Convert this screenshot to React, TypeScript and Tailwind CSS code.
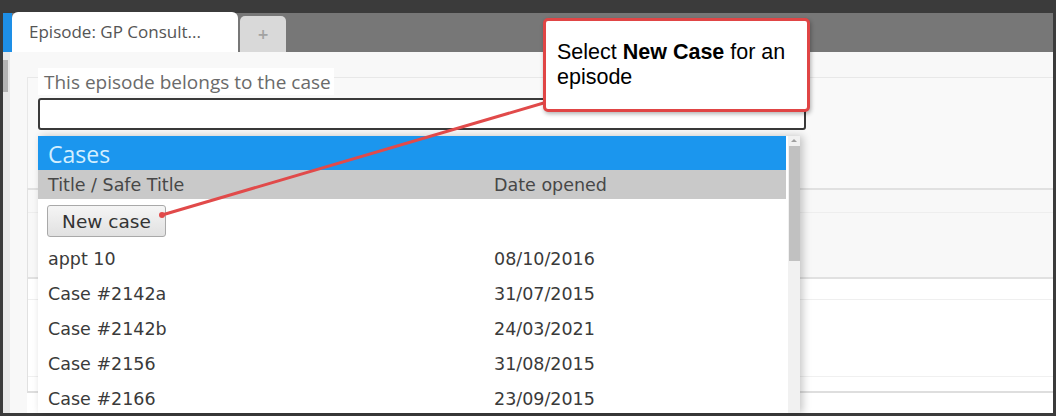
const cases = [
  { title: "appt 10", opened: "08/10/2016" },
  { title: "Case #2142a", opened: "31/07/2015" },
  { title: "Case #2142b", opened: "24/03/2021" },
  { title: "Case #2156", opened: "31/08/2015" },
  { title: "Case #2166", opened: "23/09/2015" },
];

const uiFont = "font-['Open_Sans',sans-serif]";
const listFont = "font-['DejaVu_Sans',Verdana,sans-serif]";

const CaseDropdown = () => (
  <div className="absolute left-[38px] top-[136px] bottom-[3px] w-[762px] flex shadow-[3px_0_8px_rgba(0,0,0,0.22)]">
    <div className={`flex-1 bg-white ${listFont}`}>
      <div className={`h-[34px] mr-[2px] bg-[#1b96ee] pl-[10px] text-[23px] leading-[36px] text-[#d3efff] ${uiFont}`}>
        Cases
      </div>
      <div className="h-[29px] mr-[2px] bg-[#c9c9c9] flex items-center pt-[2px] text-[17.5px] text-[#474747]">
        <span className="w-[456px] pl-[10px]">Title / Safe Title</span>
        <span>Date opened</span>
      </div>
      <button className="mt-[6px] ml-[9px] w-[119px] h-[32px] border border-[#a9a9a9] rounded-[3px] bg-gradient-to-b from-[#f5f5f5] to-[#e1e1e1] text-[18.5px] text-[#333] leading-none pt-[2px]">
        New case
      </button>
      <div className="mt-[4px]">
        {cases.map((c) => (
          <div key={c.title} className="h-[35px] flex items-center pt-[2px] text-[17.5px] text-[#3a3a3a]">
            <span className="w-[456px] pl-[10px]">{c.title}</span>
            <span>{c.opened}</span>
          </div>
        ))}
      </div>
    </div>
    <div className="w-[12px] bg-[#f1f1f1] flex flex-col items-center">
      <div className="mt-[3px] w-0 h-0 border-x-[3px] border-x-transparent border-b-[3px] border-b-[#a0a0a0]" />
      <div className="mt-[4px] w-[11px] h-[115px] bg-[#c1c1c1]" />
    </div>
  </div>
);

const Callout = () => (
  <>
    <svg className="absolute inset-0 pointer-events-none" width="1056" height="416">
      <line x1="547" y1="102" x2="162" y2="215" stroke="#e14a4a" strokeWidth="3" strokeLinecap="round" />
      <circle cx="162" cy="215" r="3" fill="#e14a4a" />
    </svg>
    <div className="absolute left-[543px] top-[18px] w-[267px] h-[94px] border-[3px] border-[#e04545] rounded-[5px] bg-white shadow-[1px_2px_4px_rgba(0,0,0,0.3)] pl-[11px] pt-[19px] font-['Liberation_Sans',Arial,sans-serif] text-[21.5px] leading-[25px] text-black">
      Select <b>New Case</b> for an episode
    </div>
  </>
);

export default function App() {
  return (
    <div className="relative w-[1056px] h-[416px] overflow-hidden bg-[#3b3b3b] pt-[13px] px-[3px] pb-[3px] flex flex-col">
      {/* tab strip */}
      <div className="h-[39px] shrink-0 bg-[#777777] flex items-end">
        <div className="w-[9px] h-full bg-[#1e8fe6]" />
        <div className={`w-[226px] h-[40px] bg-white rounded-t-[6px] flex items-center pl-[17px] text-[17px] text-[#555] ${uiFont}`}>
          Episode: GP Consult...
        </div>
        <div className="ml-[2px] w-[46px] h-[36px] bg-[#d9d9d9] rounded-t-[5px] flex items-center justify-center text-[14px] font-bold text-[#a2a2a2] font-['DejaVu_Sans',sans-serif]">
          +
        </div>
      </div>

      <div className="flex-1 flex min-h-0">
        <div className="w-[7px] bg-[#e8e8e8]">
          <div className="mt-[8px] w-[5px] h-[32px] bg-[#b3b3b3]" />
        </div>

        <div className="flex-1 bg-[#f8f8f8] pl-[17px] flex flex-col">
          <div className="mt-[25px] h-[111px] border-t border-l border-[#e8e8e8] bg-[#f9f9f9]">
            <div className={`-mt-[10px] ml-[10px] w-fit bg-white pl-[6px] pr-[3px] h-[27px] leading-[28px] text-[19px] text-[#6a6a6a] ${uiFont}`}>
              This episode belongs to the case
            </div>
            <div className="mt-[3px] ml-[10px] w-[768px] h-[32px] border-2 border-[#3a3a3a] rounded-[3px] bg-white" />
          </div>
          <div className="h-[89px] border-t-2 border-l border-[#e1e1e1] bg-[#f8f8f8]">
            <div className="h-[23px] border-b border-[#eeeeee]" />
          </div>
          <div className="h-[114px] border-t-2 border-l border-[#e1e1e1] bg-white">
            <div className="h-[21px] border-b border-[#efefef]" />
            <div className="h-[77px] border-b border-[#f0f0f0]" />
          </div>
          <div className="flex-1 border-t-2 border-[#dedede] bg-white" />
        </div>
      </div>

      <CaseDropdown />
      <Callout />
    </div>
  );
}
